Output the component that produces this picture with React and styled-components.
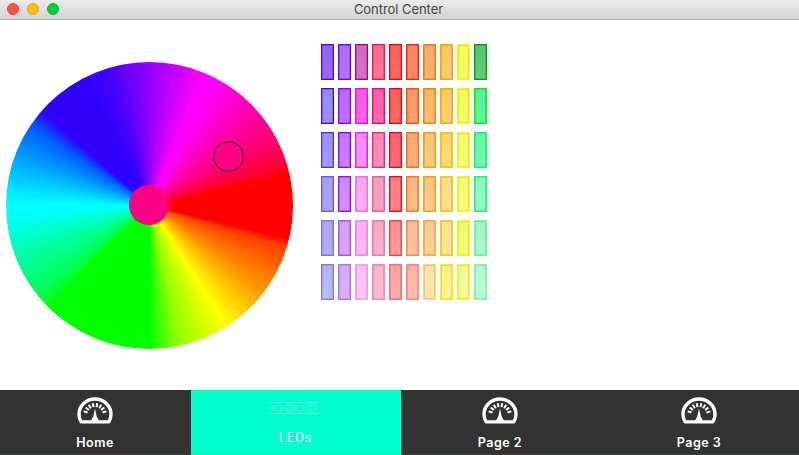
import React from "react";
import styled, { createGlobalStyle } from "styled-components";

const GlobalStyle = createGlobalStyle`
  * { box-sizing: border-box; }
  html, body { margin: 0; padding: 0; overflow: hidden; }
`;

const Window = styled.div`
  display: flex;
  flex-direction: column;
  width: 799px;
  height: 455px;
  background: #fff;
  font-family: Inter, "Liberation Sans", sans-serif;
`;

const TitleBar = styled.header`
  display: grid;
  grid-template-columns: 1fr auto 1fr;
  align-items: center;
  height: 20px;
  padding: 0 9px 1px 7px;
  background: linear-gradient(#ebebeb, #d3d3d3);
  border-bottom: 1px solid #b1b1b1;
`;

const Lights = styled.div`
  display: flex;
  gap: 8px;
`;

const Light = styled.i`
  width: 12px;
  height: 12px;
  border-radius: 50%;
  background: ${(p) => p.$fill};
  border: 1px solid ${(p) => p.$edge};
`;

const Title = styled.h1`
  margin: 0;
  font-size: 13px;
  line-height: 18px;
  font-weight: 400;
  letter-spacing: -0.05px;
  color: #454545;
`;

const Content = styled.main`
  flex: 1;
  display: flex;
  align-items: flex-start;
  padding: 24px 0 0 6px;
`;

const Wheel = styled.div`
  position: relative;
  width: 287px;
  height: 287px;
  margin: 18px 28px 0 0;
  border-radius: 50%;
  background: conic-gradient(
    #9400ff 0deg,
    #ff00ff 23deg,
    #ff00ff 27deg,
    #ff0084 57deg,
    #ff0030 74deg,
    #ff0000 77deg,
    #ff0000 103.5deg,
    #ff4000 107deg,
    #ff9600 127deg,
    #ffff00 147.5deg,
    #90ff00 168deg,
    #00ff00 180.5deg,
    #00ff00 224.5deg,
    #00ff50 231deg,
    #00ffff 267deg,
    #00ffff 271deg,
    #0060ff 303.5deg,
    #3000ff 311.5deg,
    #3000ff 334deg,
    #4400ff 343deg,
    #9400ff 360deg
  );
`;

const Hub = styled.div`
  position: absolute;
  left: 123px;
  top: 123px;
  width: 40px;
  height: 40px;
  border-radius: 50%;
  background: #ff0084;
`;

const Picker = styled.div`
  position: absolute;
  left: 207px;
  top: 79px;
  width: 31px;
  height: 31px;
  border-radius: 50%;
  border: 1px solid #000;
  background: #ff0084;
`;

const Palette = styled.div`
  display: grid;
  grid-template-columns: repeat(10, 13px);
  grid-auto-rows: 36px;
  gap: 8px 4px;
`;

const Swatch = styled.div`
  border: 1px solid ${(p) => p.$edge};
  background: linear-gradient(rgba(240, 240, 240, 0.36), rgba(255, 255, 255, 0.38)) ${(p) => p.$fill};
  box-shadow: inset 0 0 0 1px color-mix(in srgb, ${(p) => p.$edge} 22%, rgba(110, 110, 110, 0.24));
`;

const Nav = styled.nav`
  display: grid;
  grid-template-columns: 191px 210px 199px 199px;
  height: 65px;
  background: #333;
`;

const Tab = styled.a`
  display: flex;
  flex-direction: column;
  align-items: center;
  padding: ${(p) => (p.$active ? "12px 2px 0 0" : "7px 2px 0 0")};
  background: ${(p) => (p.$active ? "#00ffcb" : "#333")};
  border-bottom: 1px solid ${(p) => (p.$active ? "#00ecbc" : "#423c3c")};
  color: #fff;
`;

const Label = styled.span`
  margin-top: ${(p) => (p.$active ? "16px" : "10px")};
  padding-left: 1px;
  font-size: 12.5px;
  line-height: 16px;
  font-weight: ${(p) => (p.$active ? 400 : 600)};
  letter-spacing: ${(p) => (p.$active ? "0.7px" : "0.5px")};
`;

const palette = [
  [["#4b00f6", "#5a10ff"], ["#6a00ee", "#8024ff"], ["#ac0093", "#bf18a2"], ["#f80d50", "#ff1d5e"], ["#fa0004", "#ff0a0a"], ["#ff1e00", "#ff4412"], ["#ff7600", "#ff7f17"], ["#ffa300", "#ffae14"], ["#f5ff00"], ["#00a10a", "#00ae28"]],
  [["#4400ff", "#5b4fff"], ["#8900f4", "#9c18ff"], ["#ff00e1"], ["#f6006b", "#ff0b80"], ["#fa0000", "#ff0a0a"], ["#ff5000", "#ff6312"], ["#fb8500", "#ff9212"], ["#fcae00", "#ffb810"], ["#f2ff00"], ["#00ef10", "#00f25c"]],
  [["#552dff", "#675cff"], ["#8f00f5", "#aa30ff"], ["#ff0cfb", "#ff4cff"], ["#f42080", "#ff4a92"], ["#f70008", "#ff1020"], ["#ff7200", "#ff8028"], ["#f9a000", "#ffaa25"], ["#ffc600", "#ffc520"], ["#f2ff00", "#f2ff20"], ["#00ff69", "#12ff7a"]],
  [["#6a56f5", "#756fff"], ["#a008f0", "#b550ff"], ["#ff68f0", "#ff78f5"], ["#ee5aa0", "#ff689f"], ["#f8001d", "#ff3a40"], ["#ff8000", "#ff9149"], ["#ffa200", "#ffac3c"], ["#ffcb00", "#ffcf45"], ["#f2ff00", "#f0ff24"], ["#00ff8c", "#58f898"]],
  [["#7d74f5", "#857dff"], ["#ac53e9", "#bf70ff"], ["#f983f2", "#ff8cf4"], ["#f079ac", "#ff80ac"], ["#ff3c43", "#ff5a5a"], ["#ff8d39", "#ff9c64"], ["#ffae36", "#ffb257"], ["#ffd000", "#ffd659"], ["#eeff00", "#efff24"], ["#5fff9b", "#77f8a5"]],
  [["#817af5", "#8f94ff"], ["#b66df0", "#c783ff"], ["#fa9af2", "#ffa0f5"], ["#f08dac", "#ff91b5"], ["#ff6b6b", "#ff7777"], ["#ff8870", "#ff9380"], ["#ffd568", "#ffd27d"], ["#fff000", "#fff04f"], ["#f0ff18", "#f2fa60"], ["#78ffaa", "#8fffb6"]],
];

const ticks = [-73, -52, -32, -11, 11, 32, 52, 73];

function GaugeIcon() {
  return (
    <svg width="36" height="28" viewBox="0 0 36 28">
      <path
        d="M4.2 24.9C2.6 22.6 2 20.2 2 17.2a16 15.2 0 0 1 32 0c0 3-.6 5.4-2.2 7.7Z"
        fill="none"
        stroke="#fff"
        strokeWidth="3.4"
        strokeLinejoin="round"
      />
      <path d="M18 11.5 19.7 19.5 23 25.4H13L16.3 19.5Z" fill="#fff" />
      {ticks.map((a) => (
        <path
          key={a}
          d="M18 6v4"
          stroke="#fff"
          strokeWidth="2"
          transform={`rotate(${a} 18 17.8)`}
        />
      ))}
    </svg>
  );
}

function LedStripIcon() {
  return (
    <svg width="48" height="12" viewBox="0 0 48 12" fill="none" stroke="#fff">
      <path d="M0 .5h48M0 11.5h48" strokeOpacity=".48" />
      {[3.5, 15.5, 26.5, 38.5].map((x) => (
        <g key={x} strokeOpacity=".5">
          <rect x={x} y="3.5" width="6" height="5" strokeDasharray="2 1" />
          <path d={`M${x - 2} 4v1m0 2v1M${x + 7.5} 5.5v1`} strokeOpacity=".35" />
        </g>
      ))}
    </svg>
  );
}

const tabs = [
  { label: "Home" },
  { label: "LEDs", active: true },
  { label: "Page 2" },
  { label: "Page 3" },
];

export default function App() {
  return (
    <>
      <GlobalStyle />
      <Window>
        <TitleBar>
          <Lights>
            <Light $fill="#ff5049" $edge="#e2463f" />
            <Light $fill="#ffbf00" $edge="#e0a50f" />
            <Light $fill="#00d42d" $edge="#12b62b" />
          </Lights>
          <Title>Control Center</Title>
        </TitleBar>
        <Content>
          <Wheel>
            <Hub />
            <Picker />
          </Wheel>
          <Palette>
            {palette.flatMap((row, r) =>
              row.map(([edge, fill = edge], c) => (
                <Swatch key={`${r}-${c}`} $edge={edge} $fill={fill} />
              ))
            )}
          </Palette>
        </Content>
        <Nav>
          {tabs.map(({ label, active }) => (
            <Tab key={label} $active={active}>
              {active ? <LedStripIcon /> : <GaugeIcon />}
              <Label $active={active}>{label}</Label>
            </Tab>
          ))}
        </Nav>
      </Window>
    </>
  );
}
